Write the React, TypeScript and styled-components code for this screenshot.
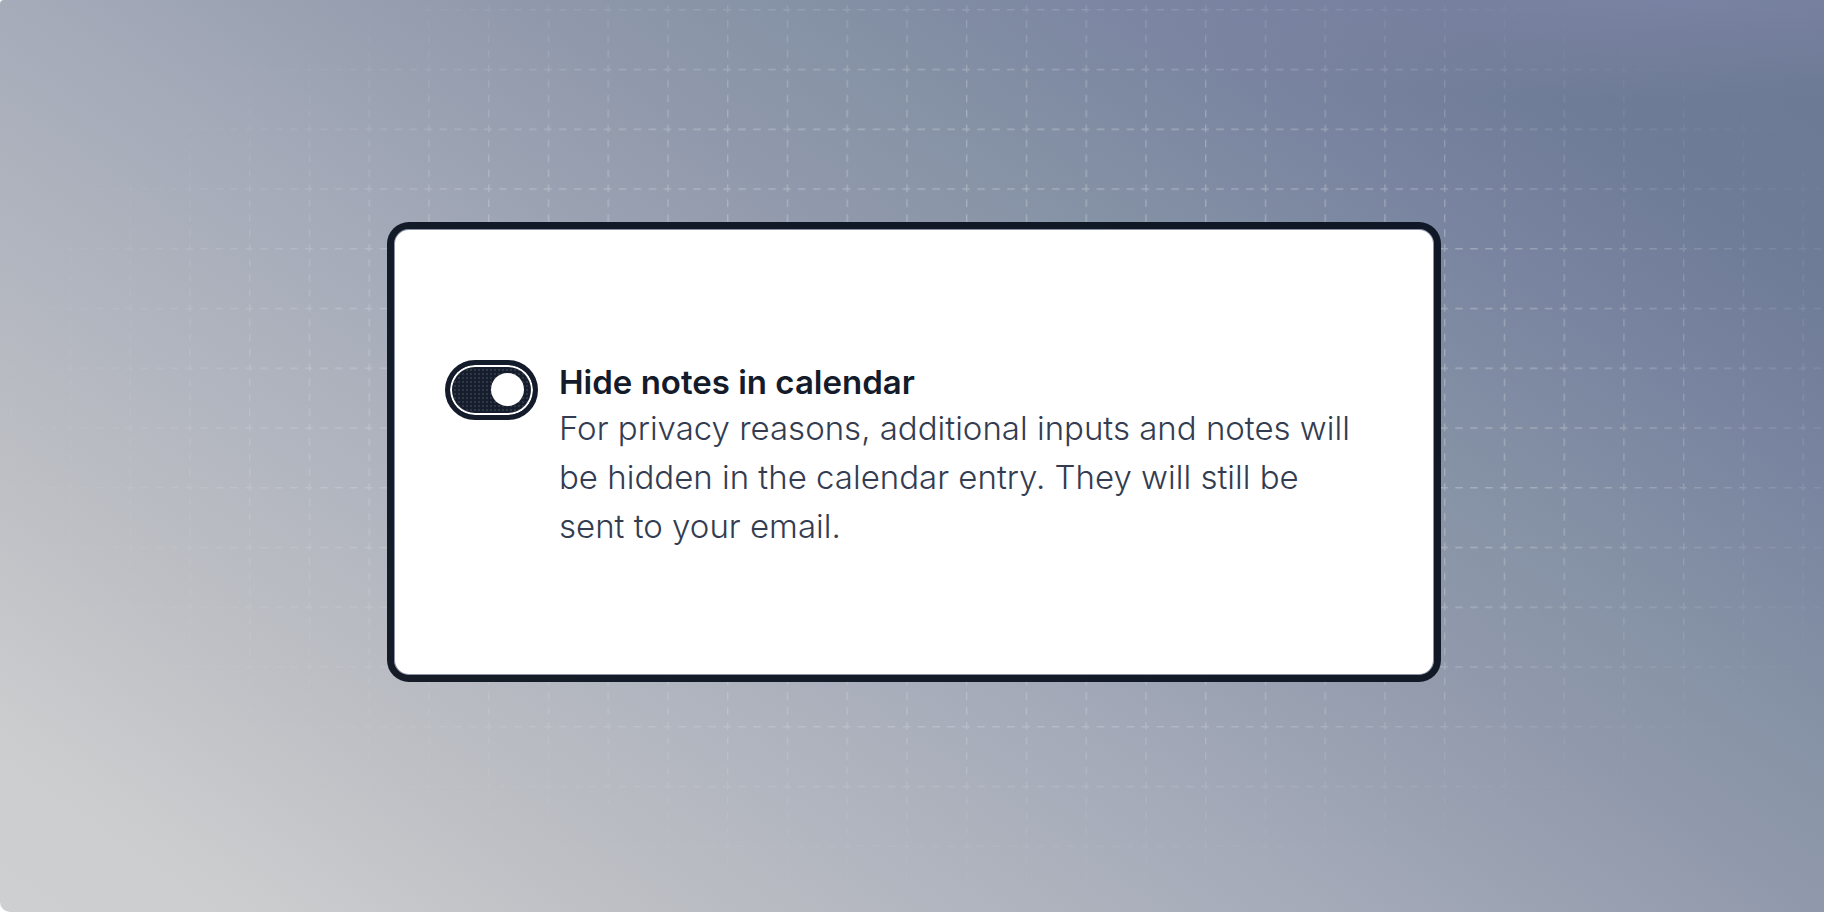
import React, { useState } from "react";
import styled, { createGlobalStyle } from "styled-components";

const GlobalStyle = createGlobalStyle`
  *, *::before, *::after { box-sizing: border-box; }
  body {
    margin: 0;
    background: #ffffff;
    font-family: Inter, "Liberation Sans", sans-serif;
  }
`;

const Stage = styled.main`
  position: relative;
  display: flex;
  align-items: center;
  justify-content: center;
  min-height: calc(100vh - 1px);
  padding: 24px 20px 32px 24px;
  overflow: hidden;
  border-radius: 4px 0 0 10px;
  background:
    radial-gradient(ellipse 800px 100px at 92% 0, rgba(140, 142, 180, 0.4), rgba(140, 142, 180, 0)),
    linear-gradient(
      215deg,
      #6b7994 0%,
      #6f7c97 13%,
      #7984a0 22%,
      #8592a5 33%,
      #939bad 44%,
      #a5abb9 58%,
      #b3b7c0 71%,
      #bdbfc4 80%,
      #cccdcf 92%,
      #cecfd1 100%
    );
`;

const GridBackdrop = styled.svg`
  position: absolute;
  inset: 0;
  width: 100%;
  height: 100%;
`;

const Card = styled.section`
  position: relative;
  display: flex;
  align-items: center;
  width: 100%;
  max-width: 1054px;
  min-height: 460px;
  padding: 54px 51px 48px;
  border: 7px solid rgba(7, 14, 27, 0.92);
  border-radius: 22px;
  background: #ffffff;
  background-clip: padding-box;
  box-shadow: inset 0 0 0 1px #8a92a8;
`;

const Setting = styled.div`
  display: flex;
  align-items: flex-start;
  gap: 21px;
`;

const Switch = styled.input`
  appearance: none;
  display: flex;
  flex: none;
  align-items: center;
  justify-content: flex-end;
  width: 93px;
  height: 60px;
  margin: 0;
  padding: 0 9px;
  border: 5px solid #141b2a;
  border-radius: 30px;
  background: #9aa1ad;
  box-shadow: inset 0 0 0 2px #ffffff;
  cursor: pointer;

  &::before {
    content: "";
    width: 33px;
    height: 33px;
    border-radius: 50%;
    background: #ffffff;
  }

  &:not(:checked) {
    justify-content: flex-start;
  }

  &:checked {
    background:
      radial-gradient(circle at 1px 1px, #2f3644 0 1px, transparent 1px) 0 0 / 4px 4px,
      #161d2c;
  }
`;

const Copy = styled.div`
  display: flex;
  flex-direction: column;
`;

const Title = styled.label`
  color: #141b2a;
  font-size: 33px;
  font-weight: 600;
  line-height: 44px;
  cursor: pointer;
`;

const Description = styled.p`
  max-width: 800px;
  margin: 0;
  color: #333c50;
  font-size: 33px;
  font-weight: 300;
  line-height: 49px;
`;

function DashedGrid() {
  return (
    <GridBackdrop aria-hidden="true">
      <defs>
        <pattern id="cell" x="10" y="9" width="59.75" height="59.75" patternUnits="userSpaceOnUse">
          <path
            d="M0.7 0V59.75M0 0.7H59.75"
            fill="none"
            stroke="#d3d8dc"
            strokeWidth="1.4"
            strokeDasharray="7.5 7.44"
            strokeDashoffset="3.7"
          />
        </pattern>
        <radialGradient id="fade" cx="52%" cy="45%" r="56%">
          <stop offset="0" stopColor="#fff" stopOpacity="0.42" />
          <stop offset="0.6" stopColor="#fff" stopOpacity="0.4" />
          <stop offset="1" stopColor="#fff" stopOpacity="0" />
        </radialGradient>
        <mask id="vignette">
          <rect width="100%" height="100%" fill="url(#fade)" />
        </mask>
      </defs>
      <rect width="100%" height="100%" fill="url(#cell)" mask="url(#vignette)" />
    </GridBackdrop>
  );
}

export default function App() {
  const [hidden, setHidden] = useState(true);

  return (
    <>
      <GlobalStyle />
      <Stage>
        <DashedGrid />
        <Card>
          <Setting>
            <Switch
              id="hide-notes"
              type="checkbox"
              role="switch"
              checked={hidden}
              onChange={(event) => setHidden(event.target.checked)}
              aria-describedby="hide-notes-description"
            />
            <Copy>
              <Title htmlFor="hide-notes">Hide notes in calendar</Title>
              <Description id="hide-notes-description">
                For privacy reasons, additional inputs and notes will be hidden in the calendar
                entry. They will still be sent to your email.
              </Description>
            </Copy>
          </Setting>
        </Card>
      </Stage>
    </>
  );
}
